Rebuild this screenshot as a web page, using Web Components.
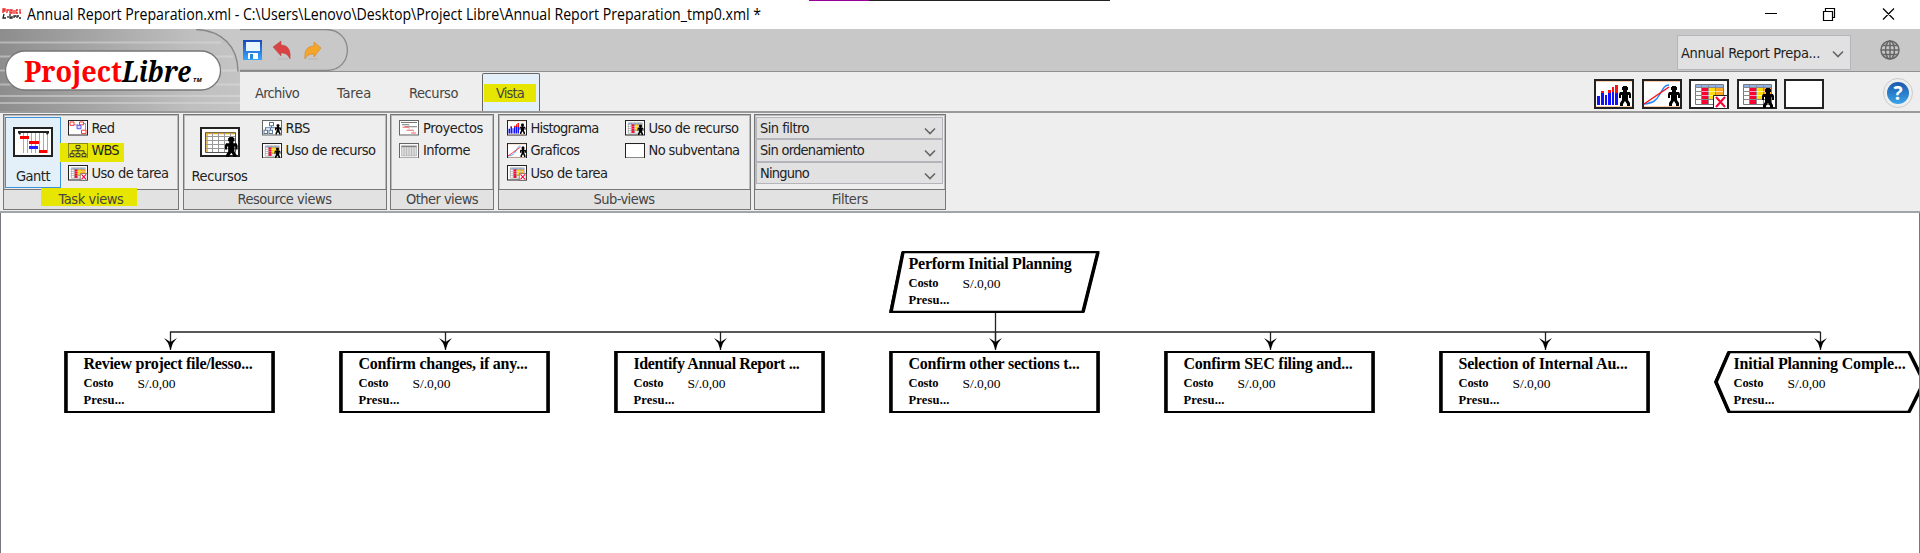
<!DOCTYPE html>
<html lang="es"><head><meta charset="utf-8"><title>ProjectLibre</title>
<style>
html,body{margin:0;height:553px;overflow:hidden;background:#fff}
body{font:14.5px "DejaVu Sans Condensed","DejaVu Sans",sans-serif;color:#222}
</style></head><body><project-app></project-app>
<script>
const man=(x,y,s)=>`<g transform="translate(${x} ${y}) scale(${s})" fill="#000"><path d="M4 0h4v1h1v3H8v2h3l1 2v4h-2V9H9v5l2 3v3H8v-2L6 15l-2 3v2H1v-3l2-3V9H2v3H0V8l1-2h3V4H3V1h1z"/></g>`;
const frame=(w,h)=>`<rect x="1" y="1" width="${w-2}" height="${h-2}" fill="#fff" stroke="#222" stroke-width="2"/>`;
const table=`<path fill="#fff" stroke="#777" d="M6.5 5.5h28v20h-28z"/><path fill="#8fb3e8" d="M7 6h27v2H7z"/><path fill="#f03" d="M13 8h6v17h-6z"/><path fill="#fd0" d="M20 8h6v13h-6z"/><path fill="#fa2" d="M27 8h7v10h-7z"/><path stroke="#888" fill="none" d="M6 8.500h28M6 12.500h7M6 16.500h7M6 20.500h28M12.500 5v20M19.500 5v20M26.500 5v20"/><path stroke="#fff" stroke-opacity=".6" d="M13 12.500h21M13 16.500h21"/>`;
const P={
gantt:frame(40,30)+`<path stroke="#aaa" d="M10.500 6v20M14.500 6v20M18.500 6v20M22.500 6v20M26.500 6v20M30.500 6v20M34.500 6v20"/><path fill="#222" d="M5 4h31v2l-2 2-1-2H8L7 8 5 6z"/><path fill="#f00" d="M7 9h9v3H7zM16 14h10v3H16zM26 23h8v3h-8z"/><path fill="#22f" d="M16 19h9v3h-9z"/>`,
res:frame(40,30)+`<path fill="#fff" stroke="#555" d="M5.500 5.500h30v20h-30z"/><path fill="none" stroke="#da2" stroke-width="1.500" d="M6 6.500h29M7 6v19"/><path stroke="#999" d="M6 9.500h29M6 13.500h29M6 17.500h29M6 21.500h29M12.500 6v19M18.500 6v19M24.500 6v19M30.500 6v19"/>`+man(25,10,1.05),
hist:frame(40,30)+`<path stroke="#fca" d="M2 2.500h36M2 27.500h36"/><path fill="#11f" d="M3 17h3v9H3zM7 13h3v13H7zM11 16h2v10h-2zM14 12h3v14h-3zM18 12h2v14h-2zM21 12h3v14h-3z"/><path fill="#f11" d="M7 12h3v2H7zM14 11h3v3h-3zM18 8h2v5h-2zM21 6h3v8h-3z"/>`+man(25,7,1),
graph:frame(40,30)+`<path stroke="#fca" d="M2 2.500h36M2 27.500h36"/><path fill="none" stroke="#28f" stroke-width="1.500" d="M2 25c9-1 12-3 16-10s5-9 9-9"/><path stroke="#f11" stroke-width="1.500" d="M2 25L27 8"/>`+man(26,7,1),
task:frame(40,30)+table+`<path fill="#fff" stroke="#222" d="M24.500 16.500h14v13h-14z"/><path stroke="#f03" stroke-width="2" d="M27 18l9 10M36 18l-9 10"/>`,
use:frame(40,30)+table+man(25,9,1),
blank:frame(40,30),
red:frame(40,32)+`<path fill="none" stroke="#777" stroke-width="1.500" d="M10 10h10l4 8M22 7h13v14"/><path fill="#fff" stroke="#f33" stroke-width="2" d="M4 4h8v7H4zM23 4h8v6h-8zM27 21h9v7h-9z"/><path fill="#ddf" stroke="#55f" stroke-width="2" d="M18 11h8v7h-8z"/>`,
wbs:`<rect x="1" y="1" width="38" height="30" fill="none" stroke="#6b6b22" stroke-width="1.500"/><path fill="none" stroke="#333" stroke-width="2" d="M16 5h8v6h-8zM20 11v5M8 21v-5h24v5M20 16v5M4 22h8v6H4zM16 22h8v6h-8zM28 22h8v6h-8z"/>`,
rbs:`<rect x="1" y="1" width="38" height="28" fill="#fff" stroke="#666" stroke-width="2"/><path fill="none" stroke="#57779c" stroke-width="2" d="M15 5h8v6h-8zM19 11v4M7 20v-5h21M17 15v5M4 20h7v6H4zM14 20h7v6h-7z"/>`+man(26,8,1),
proj:`<rect x="1" y="1" width="38" height="28" fill="#fff" stroke="#666" stroke-width="2"/><path stroke="#777" stroke-width="2" d="M4 5h32M6 9h14M11 13h25"/><path stroke="#f66" stroke-width="2" d="M7 14h13M15 20h14M24 25h10"/><path fill="none" stroke="#aaa" d="M20 9v11h9v6"/>`,
inf:`<rect x="1" y="1" width="38" height="28" fill="#fff" stroke="#666" stroke-width="2"/><path fill="#ddd" stroke="#999" d="M5 5h30v20H5z"/><path stroke="#777" stroke-width="2" d="M5 7h30"/><path stroke="#999" d="M10 8v17M15 8v17M20 8v17M25 8v17M30 8v17"/>`};
const define=(n,html,init)=>{const t=document.createElement('template');t.innerHTML=html;customElements.define(n,class extends HTMLElement{constructor(){super();this.attachShadow({mode:'open'}).append(t.content.cloneNode(true))}connectedCallback(){init&&init(this,this.shadowRoot)}})};

/* label whose text is spaced, or squeezed with the "squeeze" attribute, to fill a given width */
define('fit-text','<style>:host{display:block;white-space:pre;flex:none}span{display:inline-block}</style><span></span>',(e,r)=>{
 const s=r.querySelector('span'),t=e.getAttribute('t'),w=+e.getAttribute('w');s.textContent=t;
 s.style.letterSpacing='0px';const n=s.getBoundingClientRect().width;
 if(w){e.style.width=w+'px';if(e.hasAttribute('squeeze')){s.style.transformOrigin='0 0';s.style.transform=`scaleX(${w/n})`}else s.style.letterSpacing=((w-n)/t.length).toFixed(3)+'px'}});
define('tool-icon','<style>:host{display:block;flex:none;width:40px;height:30px}svg{display:block;width:100%;height:100%}</style><svg preserveAspectRatio="none"></svg>',(e,r)=>{
 const k=e.getAttribute('k'),s=r.querySelector('svg');s.setAttribute('viewBox',k=='red'||k=='wbs'?'0 0 40 32':'0 0 40 30');s.innerHTML=P[k]});
define('ribbon-item','',(e,r)=>{
 r.innerHTML=`<style>:host{display:flex;height:22.5px;align-items:center;gap:4px;position:relative}tool-icon{width:20px;height:15.500px;position:relative}fit-text{position:relative}.m{position:absolute;left:-8px;top:4px;width:64px;height:18.500px;background:#e6e600}</style>${e.hasAttribute('mark')?'<div class="m"></div>':''}<tool-icon k="${e.getAttribute('k')}"></tool-icon><fit-text t="${e.getAttribute('t')}" w="${e.getAttribute('w')}"></fit-text>`});
define('big-item','',(e,r)=>{r.innerHTML=`<style>:host{display:flex;flex-direction:column;align-items:center;box-sizing:border-box;width:56px;height:71px;padding-top:9px;gap:11px;border:1px solid transparent}:host([on]){background:#e3f0fa;border:1.500px solid #3d91d6}</style><tool-icon k="${e.getAttribute('k')}"></tool-icon><fit-text t="${e.getAttribute('t')}" w="${e.getAttribute('w')}"></fit-text>`});
define('ribbon-group','',(e,r)=>{r.innerHTML=`<style>:host{display:flex;flex-direction:column;box-sizing:border-box;height:96px;border:1px solid #777;outline:1px solid #bbb;outline-offset:-2px;background:#eee;flex:none}.b{flex:1;display:flex;min-height:0}.f{height:19px;border-top:1px solid #777;background:#e2e2e2;display:flex;align-items:center;justify-content:center;color:#444;position:relative}.m{position:absolute;left:37px;top:-2px;width:96px;height:18px;background:#e6e600}fit-text{position:relative;top:-1px}</style><div class="b"><slot></slot></div><div class="f">${e.hasAttribute('mark')?'<div class="m"></div>':''}<fit-text t="${e.getAttribute('t')}" w="${e.getAttribute('w')}"></fit-text></div>`});
define('drop-box','',(e,r)=>{r.innerHTML=`<style>:host{display:flex;box-sizing:border-box;height:22.500px;border:1.500px solid #b4b4bb;background:#e1e1e1;align-items:center;justify-content:space-between;padding:0 6px 0 3px}svg{display:block;position:relative;top:var(--drop,3px)}</style><fit-text t="${e.getAttribute('t')}" w="${e.getAttribute('w')}"></fit-text><svg width="12" height="8" fill="none" stroke="#666" stroke-width="1.600"><path d="M1 1.500l5 5 5-5"/></svg>`});
define('title-bar',`<style>:host{display:flex;height:29px;background:#fff;color:#000;position:relative}.logo{width:20px;height:12px;margin:8px 5px 0 2px;flex:none}.t{margin-top:3px;font:16px/22px "Open Sans","Noto Sans",sans-serif}.r{margin-left:auto;margin-right:24px;margin-top:7px}.tab{position:absolute;left:809px;top:0;width:301px;height:1px;background:linear-gradient(90deg,#909 60px,#222 60px)}</style>
<svg class="logo" viewBox="0 0 20 12"><path d="M1 5V1h2v2H1M5 5V2h2M8 2h2v3H8zM12 2v4M14 2h2M14 2v3h2M18 1v4h1" stroke="#e22" stroke-width="1.300" fill="none"/><path d="M2 6L1 10h3M6 8v2M8 6v4h2V8M12 10V8h2M15 10V8h2M17 10h2" stroke="#222" stroke-width="1.300" fill="none"/></svg><fit-text class="t" squeeze w="734" t="Annual Report Preparation.xml - C:\\Users\\Lenovo\\Desktop\\Project Libre\\Annual Report Preparation_tmp0.xml *"></fit-text>
<svg class="r" width="132" height="15" fill="none" stroke="#000" stroke-width="1.200"><path d="M1 6.500h12M59.500 4.500h9v9h-9zM61.500 4V1.500h9v9H69M119 1.500l11 11M130 1.500l-11 11"/></svg><div class="tab"></div>`);
define('app-brand',`<style>:host{display:grid;width:240px;height:82px;flex:none}svg,.n{grid-area:1/1;display:block}.n{display:flex;align-items:baseline;position:relative;padding:24px 0 0 24px;height:36px;font:bold 29px/36px "Noto Serif","Liberation Serif",serif;color:#000}.p{color:#f00}.l{font-style:italic}.tm{font:italic bold 6px/8px "Noto Sans",sans-serif;margin-left:2px}</style><svg width="240" height="82"><defs><linearGradient id="g"><stop stop-color="#8d8d8d"/><stop offset=".8" stop-color="#bfbfbf"/><stop offset="1" stop-color="#c4c4c4"/></linearGradient><linearGradient id="s" gradientUnits="userSpaceOnUse" x1="0" x2="240" y1="0" y2="0"><stop stop-color="#b5b5b5"/><stop offset="1" stop-color="#d2d2d2"/></linearGradient></defs><path fill="#c8c8c8" d="M0 0h240v82H0z"/><path fill="url(#g)" d="M0 0h198c23 2 39 18 40 42h2v40H0z"/><path stroke="url(#s)" stroke-width="2" d="M0 13.500h221M0 27.500h233M0 41.500h237M0 55.500h240M0 67h240M0 74h240"/><path fill="none" stroke="#888" stroke-width="1.500" d="M196 .5c26 1 42 17 42 42"/><rect x="5.500" y="22" width="215" height="39" rx="19.500" fill="#fff" stroke="#777" stroke-width="1.300"/></svg><div class="n"><fit-text class="p" squeeze t="Project" w="98"></fit-text><fit-text class="l" squeeze t="Libre" w="69"></fit-text><fit-text class="tm" t="TM" w="9"></fit-text></div>`);
define('quick-bar',`<style>:host{display:flex;height:43px;box-sizing:border-box;border-bottom:1.500px solid #909090;background:#c8c8c8;position:relative}svg{display:block;flex:none}drop-box{width:174px;height:35px;margin:6px 0 0 auto;background:#e1e1e1;--drop:1px}.g{margin:11px 20px 0 29px}</style>
<svg width="120" height="42"><defs><linearGradient id="a" x2="0" y2="1"><stop stop-color="#1748b8"/><stop offset="1" stop-color="#38a7ff"/></linearGradient></defs><path fill="none" stroke="#888" stroke-width="1.300" d="M0 .5h86c28 0 29 41 0 41H0"/><path fill="url(#a)" d="M3 11h19v20H3z"/><path fill="#e9f6ff" d="M6 13h14v9H6z"/><path fill="#fff" d="M8 24h10v6H8z"/><path fill="#28d" d="M10 25h3v5h-3z"/><path fill="#d94343" stroke="#b44" stroke-width=".5" d="M33 18l8-6v4c7 0 10 5 9 14-2-4-4-6-9-6v3z"/><path fill="#f5a52a" stroke="#c87b20" stroke-width=".5" d="M81 19l-7-6v4c-7 0-10 5-9 13 2-4 5-5 9-5v3z"/><path stroke="#b5b5b5" d="M38 30h10M68 30h10"/></svg>
<drop-box t="Annual Report Prepa..." w="139"></drop-box><svg class="g" width="20" height="20" viewBox="0 0 20 20" fill="none" stroke="#666" stroke-width="1.500"><circle cx="10" cy="10" r="9"/><ellipse cx="10" cy="10" rx="4.500" ry="9"/><path d="M10 1v18M1 10h18M2.500 5.500h15M2.500 14.500h15"/></svg>`);
define('tab-row',`<style>:host{display:flex;height:39px;background:#eee;color:#444;align-items:center}fit-text{line-height:20px;position:relative;top:1px}.v{box-sizing:border-box;width:58px;height:38px;margin:1px 0 0 24px;border:1.500px solid #666;border-bottom:0;border-radius:2px 2px 0 0;background:#e3f0fa;padding:9.500px 0 0 1px}.h{background:#e6e600;width:52px;height:18.500px;padding-left:12px;box-sizing:border-box;line-height:18px}.h fit-text{line-height:18px;top:0}.i{display:flex;gap:7.500px;margin-left:auto;padding-top:4px}svg{margin:3px 6px 0 58px}</style>
<fit-text style="margin-left:15px" t="Archivo" w="44"></fit-text><fit-text style="margin-left:38px" t="Tarea" w="34"></fit-text><fit-text style="margin-left:38px" t="Recurso" w="49"></fit-text><div class="v"><div class="h"><fit-text t="Vista" w="28"></fit-text></div></div>
<div class="i"><tool-icon k="hist"></tool-icon><tool-icon k="graph"></tool-icon><tool-icon k="task"></tool-icon><tool-icon k="use"></tool-icon><tool-icon k="blank"></tool-icon></div>
<svg width="32" height="32"><defs><linearGradient id="h" x2="0" y2="1"><stop stop-color="#1b58ad"/><stop offset="1" stop-color="#39a3e8"/></linearGradient></defs><circle cx="16" cy="16" r="14.500" fill="#eee" stroke="#ccc"/><circle cx="16" cy="16" r="11" fill="url(#h)"/><text x="16" y="23" text-anchor="middle" font-size="19" font-weight="700" font-family="Noto Sans" fill="#fff">?</text></svg>`);
define('app-ribbon',`<style>:host{display:flex;height:102px;box-sizing:border-box;border-top:2px solid #999;border-bottom:2px solid #a1a5a8;background:#eee;padding:1px 0 0 3px;gap:3.500px}.c{display:flex;flex-direction:column;padding-top:1.500px}drop-box{width:187px}</style>
<ribbon-group mark style="width:176px" t="Task views" w="65"><big-item on k="gantt" t="Gantt" w="34" style="margin:1.500px 0 0 1px"></big-item><div class="c" style="margin-left:6.500px"><ribbon-item k="red" t="Red" w="23"></ribbon-item><ribbon-item mark k="wbs" t="WBS" w="27"></ribbon-item><ribbon-item k="task" t="Uso de tarea" w="77"></ribbon-item></div></ribbon-group>
<ribbon-group style="width:204px" t="Resource views" w="94"><big-item k="res" t="Recursos" w="56" style="margin:1.500px 0 0 8px"></big-item><div class="c" style="margin-left:14px"><ribbon-item k="rbs" t="RBS" w="24"></ribbon-item><ribbon-item k="use" t="Uso de recurso" w="90"></ribbon-item></div></ribbon-group>
<ribbon-group style="width:104px" t="Other views" w="72"><div class="c" style="margin-left:8px"><ribbon-item k="proj" t="Proyectos" w="60"></ribbon-item><ribbon-item k="inf" t="Informe" w="47"></ribbon-item></div></ribbon-group>
<ribbon-group style="width:253px" t="Sub-views" w="61"><div class="c" style="margin-left:8px;width:118px"><ribbon-item k="hist" t="Histograma" w="68"></ribbon-item><ribbon-item k="graph" t="Graficos" w="49"></ribbon-item><ribbon-item k="task" t="Uso de tarea" w="77"></ribbon-item></div><div class="c"><ribbon-item k="use" t="Uso de recurso" w="90"></ribbon-item><ribbon-item k="blank" t="No subventana" w="91"></ribbon-item></div></ribbon-group>
<ribbon-group style="width:191.500px" t="Filters" w="36"><div class="c" style="margin-left:1px"><drop-box t="Sin filtro" w="49"></drop-box><drop-box t="Sin ordenamiento" w="104"></drop-box><drop-box t="Ninguno" w="49"></drop-box></div></ribbon-group>`);
define('wbs-node','',(e,r)=>{const k=e.getAttribute('shape')||'rect',d={rect:'M1.500 1h208v60h-208z',para:'M14 1h195l-15 60H1.500z',hex:'M15 1h180l15 30-15 30H15L1.500 31z'}[k];
r.innerHTML=`<style>:host{display:block;position:absolute;width:211px;height:62px;color:#000;font:bold 12.500px/17px "Liberation Serif",serif}svg{position:absolute;inset:0}.t{position:relative;padding:4px 0 0 20px}.h{font-size:16px;line-height:18px}.c{display:flex;gap:24px;margin-top:2px}.n{font-weight:400;font-size:13.500px}</style><svg width="211" height="62"><path d="${d}" fill="#fff" stroke="#000" stroke-width="${k=='rect'?2:2.500}"/>${k=='rect'?'<path d="M2 0v62M209 0v62" stroke="#000" stroke-width="3.500"/>':'<path d="'+(k=='para'?'M14 1L2 61M209 1l-15 60':'M15 1L2 31 15 61M195 1l15 30-15 30')+'" fill="none" stroke="#000" stroke-width="3.500"/>'}</svg><div class="t"><fit-text class="h" t="${e.getAttribute('t')}" w="${e.getAttribute('w')}"></fit-text><div class="c"><fit-text t="Costo" w="30"></fit-text><fit-text class="n" t="S/.0,00" w="38"></fit-text></div><fit-text t="Presu..." w="41"></fit-text></div>`});
define('wbs-canvas','',(e,r)=>{const a=[['Review project file/lesso...',169],['Confirm changes, if any...',169],['Identify Annual Report ...',166],['Confirm other sections t...',171],['Confirm SEC filing and...',169],['Selection of Internal Au...',169],['Initial Planning Comple...',172]];
r.innerHTML=`<style>:host{display:block;position:relative;height:340px;overflow:hidden;background:#fff;box-sizing:border-box}.l{position:absolute;inset:0}.e{position:absolute;inset:0;border:solid #77777f;border-width:0 1px}</style><svg class="l" width="1920" height="340" fill="none" stroke="#222" stroke-width="1.300"><path d="M995.500 98v38M169.900 119h1650.700"/>${a.map((_,i)=>`<path d="M${170.5+275*i} 119v18"/><path fill="#000" stroke="none" d="M${164+275*i} 125l6.500 4 6.500-4-4 5-2.500 7-2.500-7z"/>`).join('')}</svg><wbs-node shape="para" style="left:888.500px;top:37.500px" t="Perform Initial Planning" w="163"></wbs-node>${a.map((n,i)=>`<wbs-node ${i==6?'shape="hex"':''} style="left:${63.5+275*i}px;top:137.500px" t="${n[0]}" w="${n[1]}"></wbs-node>`).join('')}<div class="e"></div>`});
define('project-app',`<style>:host{display:flex;flex-direction:column;width:1920px;height:553px;overflow:hidden}.h{display:flex;height:82px}.x{flex:1}</style><title-bar></title-bar><div class="h"><app-brand></app-brand><div class="x"><quick-bar></quick-bar><tab-row></tab-row></div></div><app-ribbon></app-ribbon><wbs-canvas></wbs-canvas>`);
</script></body></html>
